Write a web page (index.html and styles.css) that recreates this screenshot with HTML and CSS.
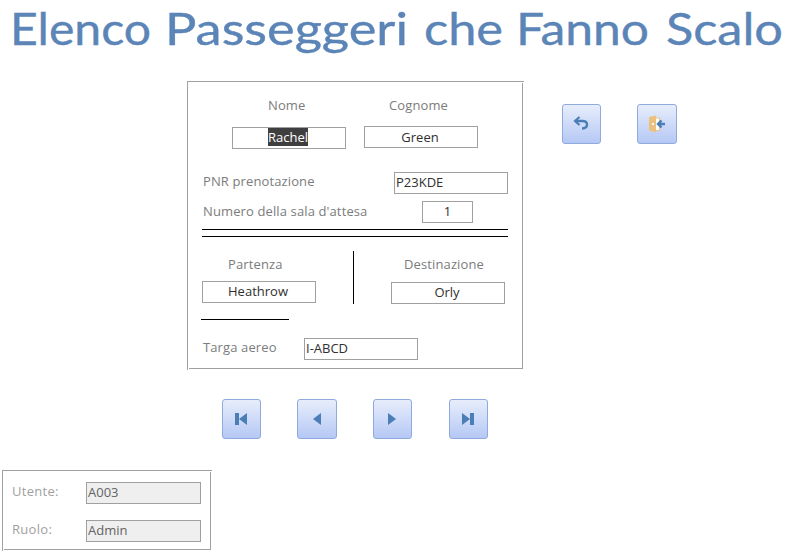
FILE: index.html
```html
<!DOCTYPE html>
<html lang="it">
<head>
<meta charset="utf-8">
<title>Elenco Passeggeri che Fanno Scalo</title>
<link rel="stylesheet" href="styles.css">
</head>
<body>
<header>
<svg class="title" width="785" height="64" role="heading" aria-level="1">
<text x="10" y="45" textLength="141" lengthAdjust="spacingAndGlyphs">Elenco</text>
<text x="165" y="45" textLength="243" lengthAdjust="spacingAndGlyphs">Passeggeri</text>
<text x="424" y="45" textLength="79" lengthAdjust="spacingAndGlyphs">che</text>
<text x="516" y="45" textLength="133" lengthAdjust="spacingAndGlyphs">Fanno</text>
<text x="666" y="45" textLength="117" lengthAdjust="spacingAndGlyphs">Scalo</text>
</svg>
</header>
<main>
<section class="panel passenger">
  <div class="names">
    <div class="col"><span class="label nome">Nome</span><div class="field center"><mark>Rachel</mark></div></div>
    <div class="col second"><span class="label cognome">Cognome</span><div class="field center">Green</div></div>
  </div>
  <div class="row pnr"><span class="label">PNR prenotazione</span><div class="field">P23KDE</div></div>
  <div class="row room"><span class="label">Numero della sala d'attesa</span><div class="field center number">1</div></div>
  <div class="double-rule"></div>
  <div class="route">
    <div class="col from"><span class="label">Partenza</span><div class="field center">Heathrow</div></div>
    <div class="divider"></div>
    <div class="col to"><span class="label">Destinazione</span><div class="field center">Orly</div></div>
  </div>
  <div class="short-rule"></div>
  <div class="row plane"><span class="label">Targa aereo</span><div class="field">I-ABCD</div></div>
</section>
<div class="actions">
  <button aria-label="Annulla"><svg width="39" height="40" viewBox="0 0 39 40"><path d="M13 17h7.500c3 0 4.500 1.400 4.500 3.600 0 2.500-1.500 3.900-5 3.900" fill="none" stroke="#4a7eb4" stroke-width="2.400"/><path d="M17.500 13l-4.500 4 4.500 4" fill="none" stroke="#4a7eb4" stroke-width="2.200"/></svg></button>
  <button class="wide" aria-label="Esci"><svg width="40" height="40" viewBox="0 0 40 40"><path d="M18 14h4.500v12.500h-4.500z" fill="#fff" stroke="#ecc07e"/><path d="M12 13l7-1.500v17l-7-2z" fill="#ecc07e"/><path d="M15 19h2v2h-2z" fill="#fff"/><path d="M28 20h-7M24.500 16.500L21 20l3.500 3.500" fill="none" stroke="#4a7eb4" stroke-width="2.400"/></svg></button>
</div>
</main>
<nav>
  <button aria-label="Primo"><svg width="39" height="40" viewBox="0 0 39 40"><path d="M13 14h4v12h-4zM25 14v12l-8-6z"/></svg></button>
  <button class="wide" aria-label="Precedente"><svg width="40" height="40" viewBox="0 0 40 40"><path d="M24 14v12l-8-6z"/></svg></button>
  <button aria-label="Successivo"><svg width="39" height="40" viewBox="0 0 39 40"><path d="M15 14v12l8-6z"/></svg></button>
  <button class="last" aria-label="Ultimo"><svg width="39" height="40" viewBox="0 0 39 40"><path d="M13 14v12l8-6zM21 14h4v12h-4z"/></svg></button>
</nav>
<section class="panel user">
  <div class="row"><span class="label">Utente:</span><div class="field">A003</div></div>
  <div class="row"><span class="label">Ruolo:</span><div class="field">Admin</div></div>
</section>
</body>
</html>
```
FILE: styles.css
```css
* { box-sizing: border-box; }
body { margin: 0; width: 785px; height: 555px; overflow: hidden; background: #fff; font: 13px/16px "Open Sans", sans-serif; color: #303030; }
header { height: 81px; }
.title { display: block; font: 45px Lato, sans-serif; fill: #5b84b7; stroke: #5b84b7; stroke-width: .4px; }
main { display: flex; padding-left: 187px; }
.panel { position: relative; border-top: 1px solid #a0a0a0; border-left: 1px solid #a0a0a0; }
.panel::after { content: ""; position: absolute; inset: 1px 1px 1px 1px; border-right: 1px solid #a0a0a0; border-bottom: 1px solid #a0a0a0; pointer-events: none; }
.passenger { width: 337px; height: 289px; }
.label { color: #7c7c7c; white-space: nowrap; letter-spacing: .12px; }
.field { width: 114px; height: 22px; border: 1px solid #a0a0a0; padding: 1px 1px 3px; line-height: 16px; white-space: nowrap; }
.center { text-align: center; }
.center:not(.number) { padding-right: 3px; }
mark { display: inline-block; height: 18px; line-height: 18px; background: #3f3f3f; color: #fff; margin-top: -1px; }
.names { display: flex; gap: 18px; padding: 15px 0 0 44px; height: 90px; }
.col { display: flex; flex-direction: column; width: 114px; }
.col .label { align-self: flex-start; }
.names .col { gap: 14px; }
.names .second { gap: 13px; }
.names .second .field { padding-top: 2px; }
.nome { margin-left: 36px; }
.cognome { margin-left: 25px; }
.row { display: flex; justify-content: space-between; padding-left: 15px; }
.row .label { margin-top: 1px; }
.pnr { width: 320px; margin-bottom: 7px; }
.room { width: 285px; }
.room .label { margin-top: 2px; }
.number { width: 51px; }
.double-rule { width: 306px; height: 8px; margin: 6px 0 14px 14px; border: solid #000; border-width: 1px 0; }
.route { display: flex; margin-left: 14px; height: 53px; }
.from { padding-top: 5px; gap: 9px; }
.from .label { margin-left: 26px; }
.divider { width: 1px; background: #000; margin: 0 37px; }
.to { padding-top: 5px; gap: 10px; }
.to .label { margin-left: 13px; }
.short-rule { width: 88px; height: 1px; margin: 15px 0 18px 13px; background: #000; }
.plane { width: 230px; }
.actions { display: flex; gap: 36px; padding: 23px 0 0 38px; }
button { display: block; width: 39px; height: 40px; padding: 0; border: 1px solid #8faadc; border-radius: 3px; background: linear-gradient(#e7edfb, #b5c8f5); }
button svg { display: block; margin: -1px; fill: #4a7eb4; }
.wide { width: 40px; }
nav { display: flex; gap: 36px; padding: 29px 0 0 222px; }
.last { margin-left: 1px; }
.user { width: 210px; height: 81px; margin: 31px 0 0 2px; padding-top: 11px; }
.user .row { width: 198px; height: 38px; padding-left: 9px; }
.user .label { color: #a0a0a0; letter-spacing: .3px; }
.user .field { width: 115px; background: #efefef; color: #636363; }
```
